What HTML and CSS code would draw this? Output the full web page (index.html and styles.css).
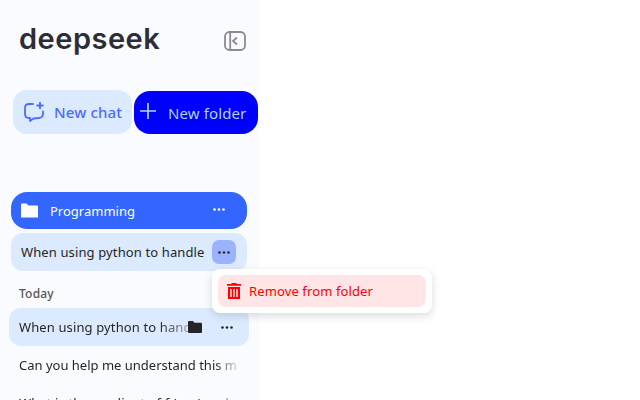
FILE: index.html
```html
<!DOCTYPE html>
<html lang="en">
<head>
<meta charset="utf-8">
<title>deepseek</title>
<link rel="stylesheet" href="styles.css">
</head>
<body>
<aside class="sidebar">
  <header class="top">
    <div class="logo">deepseek</div>
    <svg class="collapse" width="22" height="20" viewBox="0 0 22 20" fill="none" stroke="#8b8b8b" stroke-width="1.8"><rect x="1" y="1" width="20" height="18" rx="4.5"/><path d="M6.2 1v18M13 6.5L9 10l4 3.500"/></svg>
  </header>
  <div class="actions">
    <button class="new-chat">
      <svg width="22" height="22" viewBox="0 0 22 22" fill="none" stroke="#4d6bfe" stroke-width="1.8" stroke-linecap="round" stroke-linejoin="round"><path d="M10 3H6Q2 3 2 7V13Q2 17 6 17H7V20L10.500 17.500L16 17Q20 16.500 20 13V10.500"/><path d="M17 1.700V7.300M14.200 4.500H19.800"/></svg>
      <span>New chat</span>
    </button>
    <button class="new-folder">
      <svg width="16" height="16" viewBox="0 0 16 16" stroke="#add8e6" stroke-width="1.7"><path d="M0 8H16M8 0V16"/></svg>
      <span>New folder</span>
    </button>
  </div>
  <section class="folder">
    <div class="folder-head">
      <svg width="17" height="15" viewBox="0 0 17 15" fill="#fff"><path d="M0 1.200Q0 .5.700.5H5.500L7.500 2.500H16.300Q17 2.500 17 3.200V14.500H0Z"/></svg>
      <span>Programming</span>
      <svg class="dots" width="12" height="3" viewBox="0 0 12 3" fill="#fff"><circle cx="1.500" cy="1.500" r="1.300"/><circle cx="6" cy="1.500" r="1.300"/><circle cx="10.500" cy="1.500" r="1.300"/></svg>
    </div>
    <div class="folder-item">
      <span class="wide">When using python to handle</span>
      <div class="more">
        <svg width="12" height="3" viewBox="0 0 12 3" fill="#262626"><circle cx="1.500" cy="1.500" r="1.300"/><circle cx="6" cy="1.500" r="1.300"/><circle cx="10.500" cy="1.500" r="1.300"/></svg>
      </div>
      <div class="menu">
        <div class="menu-item">
          <svg width="14" height="16" viewBox="0 0 14 16" fill="#f00"><path d="M0 1H4.500V0H9.500V1H14V2.700H0Z"/><path fill-rule="evenodd" d="M1 4H13V16H1ZM3.200 6V14H4.700V6ZM6.250 6V14H7.750V6ZM9.300 6V14H10.800V6Z"/></svg>
          <span class="wide">Remove from folder</span>
        </div>
      </div>
    </div>
  </section>
  <section class="history">
    <h2>Today</h2>
    <div class="chat active">
      <span class="title">When using python to handle</span>
      <div class="tools">
        <svg width="14" height="12" viewBox="0 0 14 12" fill="#262626"><path d="M0 1Q0 0 1 0H5L6.500 1.700H13Q14 1.700 14 2.700V11Q14 12 13 12H1Q0 12 0 11Z"/></svg>
        <svg width="12" height="3" viewBox="0 0 12 3" fill="#262626"><circle cx="1.500" cy="1.500" r="1.300"/><circle cx="6" cy="1.500" r="1.300"/><circle cx="10.500" cy="1.500" r="1.300"/></svg>
      </div>
    </div>
    <div class="chat"><span class="title">Can you help me understand this math</span></div>
    <div class="chat"><span class="title last">What is the gradient of f (x, y) and</span></div>
  </section>
</aside>
</body>
</html>
```

FILE: styles.css
```css
* { box-sizing: border-box; }
body {
  margin: 0;
  height: 400px;
  overflow: hidden;
  background: #fff;
  color: #262626;
  font: 13px/20px "Noto Sans", "Open Sans", sans-serif;
}
svg { display: block; flex: none; }
.sidebar { width: 259px; height: 400px; background: #f9fbff; }
.top {
  display: flex;
  height: 90px;
  padding: 21px 13px 0 19px;
  justify-content: space-between;
  align-items: flex-start;
}
.logo {
  color: #2d2d38;
  font: 600 29px/35px Inter, Lato, sans-serif;
  letter-spacing: .5px;
}
.collapse { margin-top: 10px; }
.actions { display: flex; gap: 2px; padding-left: 13px; height: 102px; }
button {
  display: flex;
  align-items: center;
  border: 0;
  padding: 0;
  white-space: nowrap;
  font-family: inherit;
  font-size: 15px;
  letter-spacing: .12px;
}
.new-chat {
  width: 119px;
  height: 44px;
  padding-left: 10px;
  gap: 9px;
  border-radius: 14px;
  background: #dbeafe;
  color: #4d6bfe;
  font-weight: 500;
}
.new-folder {
  width: 124px;
  height: 43px;
  margin-top: 1px;
  padding-left: 6px;
  gap: 12px;
  border-radius: 16px;
  background: #00f;
  color: #add8e6;
}
.new-folder svg { margin-bottom: 4px; }
.folder { width: 236px; margin-left: 11px; }
.folder-head {
  display: flex;
  align-items: center;
  height: 37px;
  padding: 0 22px 0 10px;
  border-radius: 16px;
  background: #36f;
  color: #fff;
}
.folder-head span { margin-left: 12px; }
.dots { margin: 0 0 2px auto; }
.wide { letter-spacing: .12px; }
.folder-item {
  position: relative;
  display: flex;
  align-items: center;
  justify-content: space-between;
  height: 38px;
  margin-top: 4px;
  padding: 0 11px 0 10px;
  border-radius: 12px;
  background: #dbeafe;
  white-space: nowrap;
}
.more {
  display: grid;
  place-items: center;
  width: 24px;
  height: 24px;
  border-radius: 7px;
  background: #9bb3ff;
}
.menu {
  position: absolute;
  z-index: 2;
  left: 201px;
  top: 36px;
  width: 220px;
  height: 44px;
  padding: 6px;
  border-radius: 8px;
  background: #fff;
  box-shadow: 0 3px 8px rgba(0, 0, 0, .14);
}
.menu-item {
  display: flex;
  align-items: center;
  gap: 8px;
  height: 32px;
  padding-left: 9px;
  border-radius: 8px;
  background: #ffe5e5;
  color: #f00;
}
.history {
  width: 240px;
  height: 129px;
  margin-left: 9px;
  overflow: hidden;
}
h2 {
  height: 37px;
  margin: 0;
  padding: 13px 0 0 10px;
  color: #555;
  font-size: 12px;
  line-height: 20px;
  font-weight: 500;
  letter-spacing: .2px;
}
.chat {
  display: flex;
  align-items: center;
  position: relative;
  height: 38px;
  padding: 0 12px 0 10px;
  border-radius: 12px;
}
.active { background: #dbeafe; }
.title {
  width: 218px;
  overflow: hidden;
  white-space: nowrap;
  -webkit-mask-image: linear-gradient(90deg, #000 196px, transparent 222px);
  mask-image: linear-gradient(90deg, #000 196px, transparent 222px);
}
.last { letter-spacing: .12px; }
.active .title {
  letter-spacing: .12px;
  -webkit-mask-image: linear-gradient(90deg, #000 140px, transparent 185px);
  mask-image: linear-gradient(90deg, #000 140px, transparent 185px);
}
.tools {
  position: absolute;
  right: 16px;
  display: flex;
  align-items: center;
  gap: 19px;
}
```
